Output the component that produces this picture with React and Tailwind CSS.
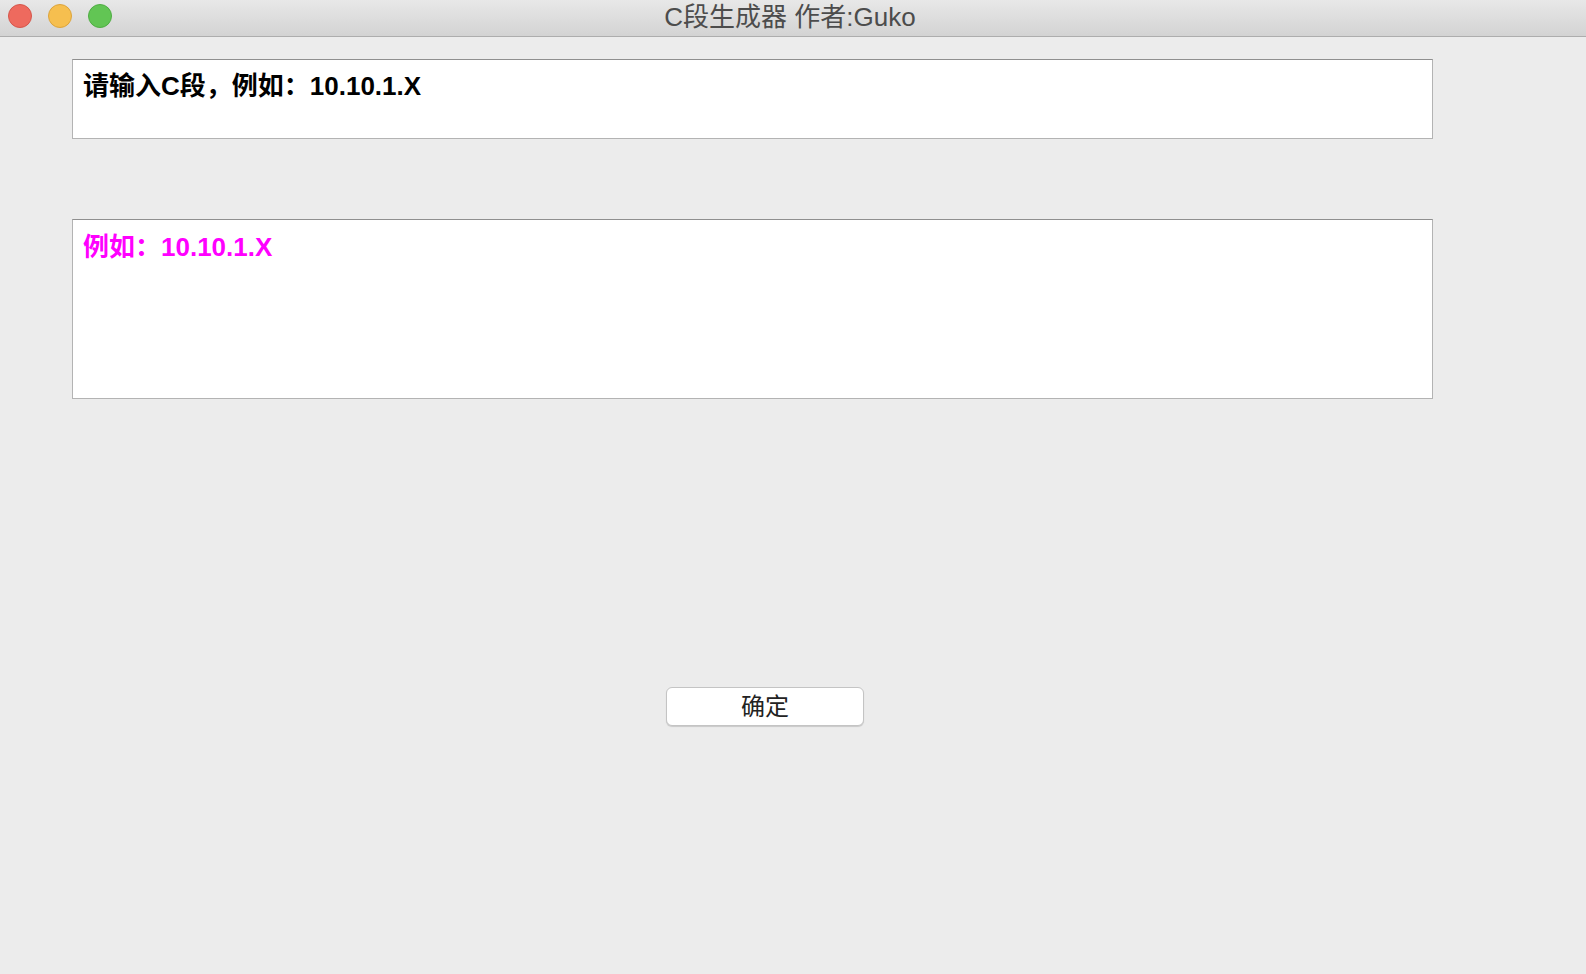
const App = () => {
  return (
    <div
      className="w-[1586px] h-[974px] bg-[#ececec] flex flex-col overflow-hidden"
      style={{ fontFamily: '"Liberation Sans", "Noto Sans CJK SC", sans-serif' }}
    >
      {/* title bar */}
      <div className="relative h-[37px] shrink-0 bg-gradient-to-b from-[#e8e8e8] to-[#d3d3d3] border-b border-[#adadad] flex items-center justify-center">
        <div className="absolute left-[8px] top-[4px] flex gap-[16px]">
          <span className="w-[24px] h-[24px] rounded-full bg-[#ee6a5e] border border-[#d5564b]" />
          <span className="w-[24px] h-[24px] rounded-full bg-[#f6bf4f] border border-[#dca43c]" />
          <span className="w-[24px] h-[24px] rounded-full bg-[#62c554] border border-[#4fad43]" />
        </div>
        <span className="text-[26px] leading-none text-[#4c4c4c] -ml-[6px] -mt-[2px]">C段生成器 作者:Guko</span>
      </div>

      {/* content */}
      <div className="flex flex-col pl-[72px] pt-[22px] w-[1433px]">
        <div className="h-[80px] bg-white border border-[#b3b3b3] border-t-[#8f8f8f] px-[10px] pt-[11px]">
          <span className="text-[26px] font-bold text-black leading-[30px]">请输入C段，例如：10.10.1.X</span>
        </div>

        <div className="h-[180px] mt-[80px] bg-white border border-[#b3b3b3] border-t-[#8f8f8f] px-[10px] pt-[12px]">
          <span className="text-[26px] font-bold text-[#ff00ff] leading-[30px]">例如：10.10.1.X</span>
        </div>

        <button className="mt-[288px] ml-[594px] w-[198px] h-[39px] bg-white rounded-[6px] border border-[#c4c4c4] shadow-[0_1px_1px_rgba(0,0,0,0.15)] text-[24px] leading-none text-[#222]">
          确定
        </button>
      </div>
    </div>
  );
};

export default App;
